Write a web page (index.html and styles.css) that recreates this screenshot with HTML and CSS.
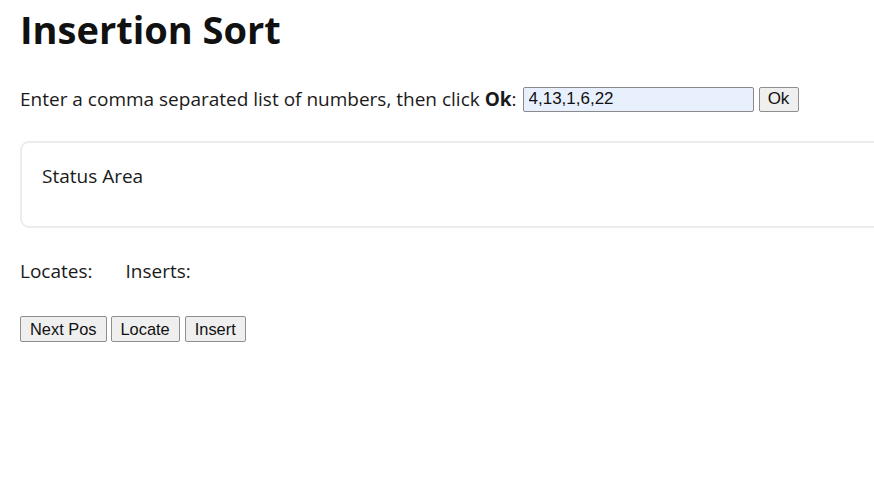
FILE: index.html
```html
<!DOCTYPE html>
<html lang="en">
<head>
<meta charset="utf-8">
<title>Insertion Sort</title>
<link rel="stylesheet" href="styles.css">
</head>
<body>
<h1 class="title">Insertion Sort</h1>
<p class="prompt">Enter a comma separated list of numbers, then click <b>Ok</b>: <input class="list-input" type="text" value="4,13,1,6,22"> <button class="btn btn-ok">Ok</button></p>
<div class="status">Status Area</div>
<div class="counts"><span class="count">Locates:</span><span class="count">Inserts:</span></div>
<div class="actions"><button class="btn">Next Pos</button> <button class="btn">Locate</button> <button class="btn">Insert</button></div>
</body>
</html>
```
FILE: styles.css
```css
html { overflow-x: hidden; }
body {
  margin: 0;
  padding: 0 0 0 20px;
  font-family: "Open Sans", "Noto Sans", sans-serif;
  font-size: 19px;
  color: #1a1a1a;
  background: #fff;
}
.title {
  margin: 0;
  padding-top: 6px;
  font-size: 38px;
  font-weight: 700;
  line-height: 46px;
  color: #111;
}
.prompt {
  margin: 34px 0 0 0;
  line-height: 26px;
  height: 26px;
  display: flex;
  align-items: center;
  white-space: pre;
}
.prompt b { font-weight: 700; }
.list-input {
  box-sizing: border-box;
  width: 231px;
  height: 25px;
  margin: 0 5px 0 1px;
  padding: 0 5px;
  border: 1px solid #8a8a8a;
  border-radius: 2px;
  background: #e8f0fe;
  font-family: "Liberation Sans", Arial, sans-serif;
  font-size: 17px;
  color: #111;
}
.btn {
  box-sizing: border-box;
  height: 26px;
  padding: 0 9px;
  border: 1px solid #8f8f8f;
  border-radius: 2px;
  background: #efefef;
  font-family: "Liberation Sans", Arial, sans-serif;
  font-size: 16.4px;
  color: #111;
}
.btn-ok {
  height: 25px;
  width: 40px;
  padding: 0;
  font-size: 17px;
}
.status {
  box-sizing: border-box;
  width: 880px;
  height: 87px;
  margin-top: 29px;
  padding: 20px 20px 0 20px;
  line-height: 26px;
  border: 2px solid #ececec;
  border-radius: 9px;
}
.counts {
  margin-top: 30px;
  line-height: 26px;
  display: flex;
  gap: 33px;
}
.actions {
  margin-top: 32px;
  display: flex;
  gap: 4px;
}
.actions .btn + .btn + .btn { margin-left: 1px; }
```
